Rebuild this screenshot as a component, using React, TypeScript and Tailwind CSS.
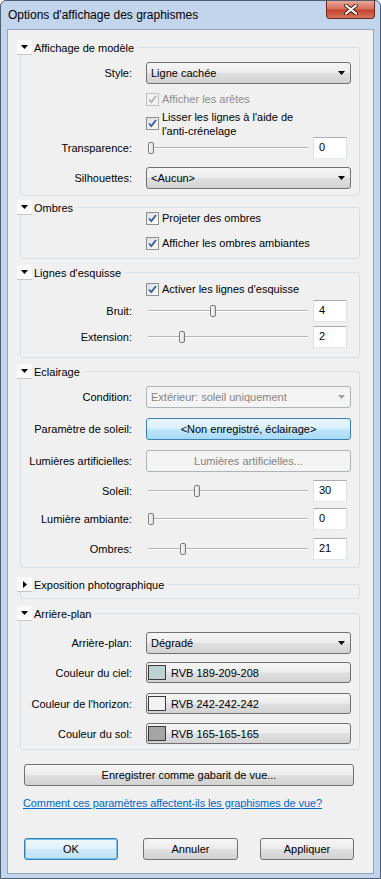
import React from 'react';

const btnGrad = 'bg-[linear-gradient(to_bottom,#f6f6f6_0%,#ececec_48%,#dfdfdf_52%,#d3d3d3_100%)]';

function Tri({ open = true }: { open?: boolean }) {
  return open ? (
    <svg width="7" height="4" viewBox="0 0 7 4"><path d="M0 0h7L3.5 4z" fill="#000" /></svg>
  ) : (
    <svg width="4" height="7" viewBox="0 0 4 7"><path d="M0 0v7l4-3.5z" fill="#000" /></svg>
  );
}

function Group({ title, open = true, className, children }: { title: string; open?: boolean; className: string; children?: React.ReactNode }) {
  return (
    <div className={`ml-[12px] w-[340px] border border-[#d5dfe5] rounded-[3px] ${className}`}>
      <div className="flex items-center h-[15px] -mt-[8px] -mb-[7px] -ml-[4px]">
        <div className="w-[15px] h-[15px] bg-[#fafafa] border-b border-[#c4c4c4] flex items-center justify-center">
          <Tri open={open} />
        </div>
        <span className="bg-[#f0f0f0] pl-[2px] pr-[4px] leading-[15px] pt-[1px]">{title}</span>
      </div>
      {children}
    </div>
  );
}

function Row({ label, className, children }: { label?: string; className: string; children: React.ReactNode }) {
  return (
    <div className={`flex items-center ${className}`}>
      <div className="w-[111px] shrink-0 text-right pt-[1px]">{label}</div>
      <div className="ml-[14px] flex items-center">{children}</div>
    </div>
  );
}

function Combo({ text, disabled = false }: { text: string; disabled?: boolean }) {
  return (
    <div
      className={`w-[205px] h-[22px] rounded-[3px] border flex items-center justify-between pl-[4px] pr-[5px] ${
        disabled ? 'border-[#adb2b5] bg-[#f4f4f4] text-[#838383]' : `border-[#707070] ${btnGrad}`
      }`}
    >
      <span>{text}</span>
      <svg width="7" height="4" viewBox="0 0 7 4"><path d="M0 0h7L3.5 4z" fill={disabled ? '#a0a0a0' : '#000'} /></svg>
    </div>
  );
}

function Check({ label, disabled = false }: { label: React.ReactNode; disabled?: boolean }) {
  return (
    <div className="flex items-center gap-[3px]">
      <div
        className={`w-[13px] h-[13px] shrink-0 border flex items-center justify-center ${
          disabled ? 'border-[#c0c0c0] bg-[#f2f2f2]' : 'border-[#8e8f8f] bg-[linear-gradient(135deg,#d9dce1,#ffffff)]'
        }`}
      >
        <svg width="9" height="9" viewBox="0 0 9 9">
          <path d="M1 4.5l2.3 2.6L8 1" fill="none" stroke={disabled ? '#b0b0b0' : '#3b58a0'} strokeWidth="1.8" />
        </svg>
      </div>
      <span className={`pt-[1px] ${disabled ? 'text-[#8d8d8d]' : ''}`}>{label}</span>
    </div>
  );
}

function Slider({ value, max }: { value: number; max: number }) {
  return (
    <div className="relative w-[164px] h-[22px] flex items-center px-[2px]">
      <div className="w-full h-[2px] border-t border-[#b4b4b4] border-b border-b-white" />
      <div
        className="absolute top-[5px] w-[6px] h-[12px] rounded-[2px] border border-[#7a7a7a] bg-[linear-gradient(to_right,#fdfdfd,#dcdcdc)]"
        style={{ left: 2 + Math.round((value / max) * 154) }}
      />
    </div>
  );
}

function NumBox({ value }: { value: number }) {
  return (
    <div className="ml-[3px] w-[34px] h-[22px] border border-[#abadb3] border-b-[#e3e9ef] border-x-[#dbdfe6] bg-white pl-[5px] pb-[2px] flex items-center">
      {value}
    </div>
  );
}

function Btn({ children, className = '', kind = 'normal' }: { children: React.ReactNode; className?: string; kind?: 'normal' | 'hot' | 'disabled' | 'default' }) {
  const look =
    kind === 'hot'
      ? 'border-[#3c7fb1] bg-[linear-gradient(to_bottom,#eaf6fd_0%,#d9f0fc_48%,#bee6fd_52%,#a7d9f5_100%)]'
      : kind === 'disabled'
      ? 'border-[#adb2b5] bg-[#f4f4f4] text-[#838383]'
      : kind === 'default'
      ? 'border-[#3c7fb1] bg-[linear-gradient(to_bottom,#eef7fd_0%,#e2f2fb_48%,#cfe9f8_52%,#bfe1f5_100%)] shadow-[inset_0_0_0_1px_#74c3ec]'
      : `border-[#707070] ${btnGrad}`;
  return <div className={`h-[22px] rounded-[3px] border flex items-center justify-center pt-[1px] ${look} ${className}`}>{children}</div>;
}

function ColorBtn({ color, text }: { color: string; text: string }) {
  return (
    <div className={`w-[205px] h-[21px] rounded-[3px] border border-[#707070] ${btnGrad} flex items-center pl-[1px]`}>
      <div className={`w-[18px] h-[15px] border border-[#3a3a3a] ${color}`} />
      <span className="ml-[5px] pt-[1px]">{text}</span>
    </div>
  );
}

export default function App() {
  return (
    <div className="w-[381px] h-[879px] bg-[#c3d5ec] border border-[#4f5e72] rounded-t-[6px] flex flex-col font-['Liberation_Sans',Arial,sans-serif] text-[11px] text-black overflow-hidden">
      <div className="h-[28px] shrink-0 flex justify-between">
        <div className="pl-[7px] pt-[7px] text-[12px] leading-[15px]">Options d'affichage des graphismes</div>
        <div className="mr-[5px] w-[49px] h-[18px] rounded-b-[4px] border border-t-0 border-[#6b2a22] bg-[linear-gradient(to_bottom,#e9a899_0%,#d8705f_45%,#c4462f_55%,#d5735c_100%)] flex items-center justify-center">
          <svg width="14" height="11" viewBox="0 0 14 11">
            <path d="M2 1.5l10 8M12 1.5l-10 8" stroke="#4a1d17" strokeWidth="4" strokeLinecap="round" />
            <path d="M2 1.5l10 8M12 1.5l-10 8" stroke="#fff" strokeWidth="2.2" strokeLinecap="round" />
          </svg>
        </div>
      </div>

      <div className="flex-1 mx-[6px] mb-[4px] border border-[#8fa3bd] bg-[#f0f0f0] flex flex-col">
        <Group title="Affichage de modèle" className="mt-[17px] pb-[6px]">
          <Row label="Style:" className="mt-[14px] h-[22px]"><Combo text="Ligne cachée" /></Row>
          <Row className="mt-[8px] h-[14px]"><Check label="Afficher les arêtes" disabled /></Row>
          <Row className="mt-[3px] h-[28px]">
            <Check label={<span className="block leading-[14px]">Lisser les lignes à l'aide de<br />l'anti-crénelage</span>} />
          </Row>
          <Row label="Transparence:" className="h-[22px]"><Slider value={0} max={100} /><NumBox value={0} /></Row>
          <Row label="Silhouettes:" className="mt-[8px] h-[22px]"><Combo text="<Aucun>" /></Row>
        </Group>

        <Group title="Ombres" className="mt-[11px] pb-[8px]">
          <Row className="mt-[3px] h-[14px]"><Check label="Projeter des ombres" /></Row>
          <Row className="mt-[11px] h-[14px]"><Check label="Afficher les ombres ambiantes" /></Row>
        </Group>

        <Group title="Lignes d'esquisse" className="mt-[13px] pb-[9px]">
          <Row className="mt-[9px] h-[14px]"><Check label="Activer les lignes d'esquisse" /></Row>
          <Row label="Bruit:" className="mt-[4px] h-[22px]"><Slider value={4} max={10} /><NumBox value={4} /></Row>
          <Row label="Extension:" className="mt-[4px] h-[22px]"><Slider value={2} max={10} /><NumBox value={2} /></Row>
        </Group>

        <Group title="Eclairage" className="mt-[13px] pb-[7px]">
          <Row label="Condition:" className="mt-[14px] h-[22px]"><Combo text="Extérieur: soleil uniquement" disabled /></Row>
          <Row label="Paramètre de soleil:" className="mt-[10px] h-[22px]">
            <Btn kind="hot" className="w-[205px]">&lt;Non enregistré, éclairage&gt;</Btn>
          </Row>
          <Row label="Lumières artificielles:" className="mt-[10px] h-[22px]">
            <Btn kind="disabled" className="w-[205px]">Lumières artificielles...</Btn>
          </Row>
          <Row label="Soleil:" className="mt-[8px] h-[22px]"><Slider value={30} max={100} /><NumBox value={30} /></Row>
          <Row label="Lumière ambiante:" className="mt-[6px] h-[22px]"><Slider value={0} max={100} /><NumBox value={0} /></Row>
          <Row label="Ombres:" className="mt-[8px] h-[22px]"><Slider value={21} max={100} /><NumBox value={21} /></Row>
        </Group>

        <Group title="Exposition photographique" open={false} className="mt-[16px] h-[15px]" />

        <Group title="Arrière-plan" className="mt-[14px] pb-[5px]">
          <Row label="Arrière-plan:" className="mt-[18px] h-[22px]"><Combo text="Dégradé" /></Row>
          <Row label="Couleur du ciel:" className="mt-[8px] h-[21px]"><ColorBtn color="bg-[#bdd1d0]" text="RVB 189-209-208" /></Row>
          <Row label="Couleur de l'horizon:" className="mt-[10px] h-[21px]"><ColorBtn color="bg-[#f2f2f2]" text="RVB 242-242-242" /></Row>
          <Row label="Couleur du sol:" className="mt-[9px] h-[21px]"><ColorBtn color="bg-[#a5a5a5]" text="RVB 165-165-165" /></Row>
        </Group>

        <Btn className="mt-[14px] ml-[16px] w-[330px]">Enregistrer comme gabarit de vue...</Btn>

        <div className="mt-[10px] ml-[15px] leading-[14px] tracking-[-0.1px]">
          <span className="text-[#0066cc] underline">Comment ces paramètres affectent-ils les graphismes de vue?</span>
        </div>

        <div className="mt-[28px] flex">
          <Btn kind="default" className="ml-[16px] w-[94px]">OK</Btn>
          <Btn className="ml-[25px] w-[95px]">Annuler</Btn>
          <Btn className="ml-[22px] w-[94px]">Appliquer</Btn>
        </div>
      </div>
    </div>
  );
}
